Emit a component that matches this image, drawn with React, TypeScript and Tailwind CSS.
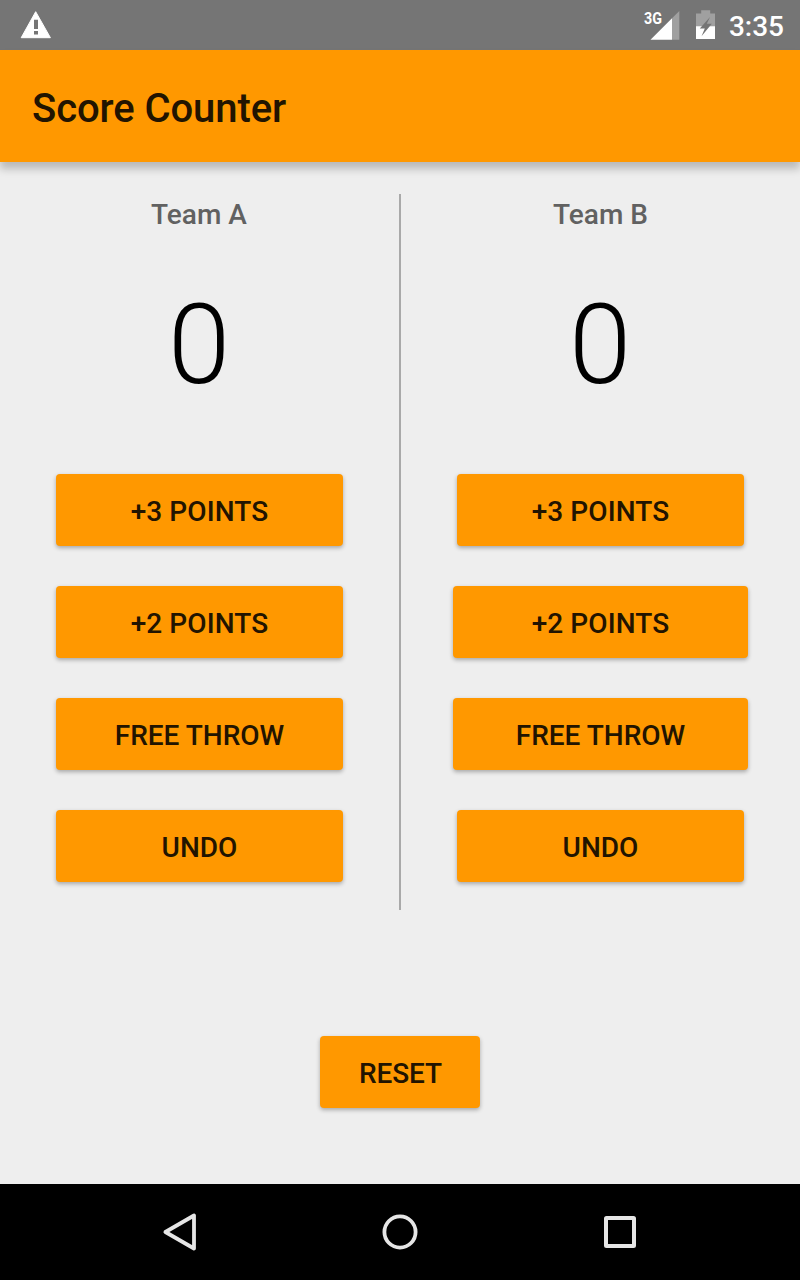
import React from "react";

const button =
  "flex h-[72px] items-center justify-center rounded-[4px] bg-[#ff9800] pt-1 text-[28px] font-medium leading-none text-[#221400] shadow-[0_2px_4px_rgba(0,0,0,0.3)]";

function Team({ name, wide }: { name: string; wide?: boolean }) {
  const middle = wide ? "w-[295px]" : "w-[287px]";
  return (
    <section className="flex w-[399px] flex-col items-center">
      <h2 className={`mt-[5px] h-8 text-[28px] font-medium leading-8 text-[#616161] ${wide ? "" : "pr-px"}`}>{name}</h2>
      <div className="mt-12 h-[132px] pr-px text-[112px] font-light leading-[132px] text-black">0</div>
      <div className="mt-[63px] flex flex-col items-center gap-10">
        <button className={`${button} w-[287px] tracking-[0.1px]`}>+3 POINTS</button>
        <button className={`${button} ${middle} tracking-[0.1px]`}>+2 POINTS</button>
        <button className={`${button} ${middle}`}>FREE THROW</button>
        <button className={`${button} w-[287px]`}>UNDO</button>
      </div>
    </section>
  );
}

export default function App() {
  return (
    <div className="flex h-[1280px] w-[800px] flex-col bg-[#eeeeee] font-[Roboto,sans-serif]">
      <div className="flex h-[50px] shrink-0 items-center bg-[#757575] text-white">
        <svg className="h-[50px] w-[60px]" viewBox="0 0 60 50">
          <path d="M35.7 11.7 50.4 37.7H21.2Z" fill="#fff" stroke="#fff" strokeWidth="1" strokeLinejoin="round" />
          <path d="M34 19.7h4v9.3h-4zM34 31h4v3.6h-4z" fill="#757575" />
        </svg>
        <svg className="ml-auto h-[50px] w-[90px]" viewBox="635 0 90 50">
          <text x="644" y="23.8" fontSize="16.5" fontWeight="700" fill="#fff" textLength="18" lengthAdjust="spacingAndGlyphs">3G</text>
          <path d="M672 18.2 679.3 11V39.7H672Z" fill="#a0a0a0" />
          <path d="M672 18.2V39.7H650.5Z" fill="#fff" />
          <path d="M701.2 10.3h9v3.2h4.8V26.2h-19V13.5h5.2z" fill="#a0a0a0" />
          <path d="M696 26.2h19v12.8h-19z" fill="#fff" />
          <path d="M710 17 699.8 28.5h5L701.5 36.2l10.3-12.4h-5Z" fill="#757575" />
        </svg>
        <span className="ml-1 mr-4 pt-1 text-[28px] font-medium leading-none">3:35</span>
      </div>
      <header className="z-10 flex h-28 shrink-0 items-center bg-[#ff9800] pl-8 pt-1.5 text-[40px] font-medium tracking-[-0.08px] text-[#221400] shadow-[0_7px_8px_rgba(0,0,0,0.22)]">
        Score Counter
      </header>
      <main className="flex h-[1022px] shrink-0 flex-col items-center pt-8">
        <div className="flex h-[716px] w-full">
          <Team name="Team A" />
          <div className="w-[2px] bg-[#a9a9a9]" />
          <Team name="Team B" wide />
        </div>
        <button className={`${button} mt-[126px] w-40 pl-px tracking-[-0.1px]`}>RESET</button>
      </main>
      <nav className="h-24 shrink-0 bg-black">
        <svg className="h-24 w-[800px]" viewBox="0 1184 800 96" fill="none" stroke="#e6e6e6" strokeWidth="3.8" strokeLinejoin="round">
          <path d="M194 1215.5v33l-28.6-16.5Z" />
          <circle cx="400" cy="1232" r="15.6" />
          <rect x="606" y="1218" width="28" height="28" rx="0.5" strokeWidth="4" />
        </svg>
      </nav>
    </div>
  );
}
